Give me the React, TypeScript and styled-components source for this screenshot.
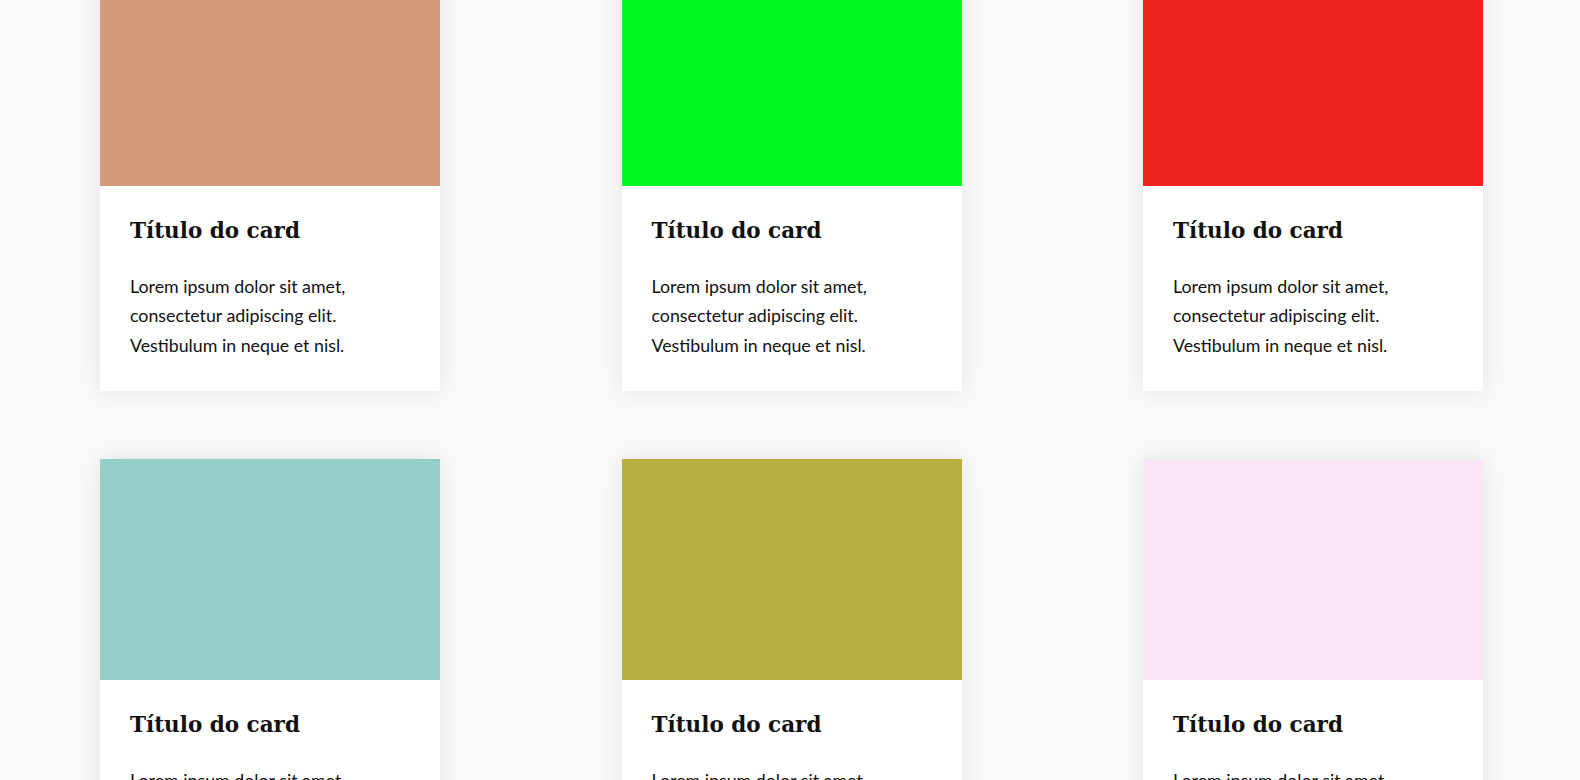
import React from "react";
import styled, { createGlobalStyle } from "styled-components";

const GlobalStyle = createGlobalStyle`
  * {
    box-sizing: border-box;
  }
  html, body {
    margin: 0;
    padding: 0;
    background: #f9f9f9;
    overflow: hidden;
  }
  body {
    font-family: Lato, "Noto Sans", sans-serif;
    color: #111;
  }
`;

const Grid = styled.main`
  display: grid;
  grid-template-columns: repeat(3, 340px);
  column-gap: 181.5px;
  row-gap: 68px;
  padding: 0 0 0 100px;
  margin-top: -35px;
`;

const Card = styled.article`
  background: #fff;
  box-shadow: 0 0 22px rgba(0, 0, 0, 0.09);
  display: flex;
  flex-direction: column;
`;

const Cover = styled.div<{ $color: string }>`
  height: 221px;
  background: ${(p) => p.$color};
`;

const Body = styled.div`
  padding: 30px 30px 31px;
`;

const Title = styled.h2`
  margin: 0 0 25.5px;
  font-family: "DejaVu Serif", "Liberation Serif", serif;
  font-weight: 700;
  font-size: 21.5px;
  line-height: 30px;
  color: #111;
`;

const Text = styled.p`
  margin: 0;
  font-family: Lato, sans-serif;
  font-size: 17.8px;
  line-height: 29.5px;
  color: #111;
`;

const colors = ["#d3997b", "#00f821", "#f0221f", "#94cec8", "#b8af40", "#f9e5f5"];

export default function App() {
  return (
    <>
      <GlobalStyle />
      <Grid>
        {colors.map((c, i) => (
          <Card key={i}>
            <Cover $color={c} />
            <Body>
              <Title>Título do card</Title>
              <Text>
                Lorem ipsum dolor sit amet,
                <br />
                consectetur adipiscing elit.
                <br />
                Vestibulum in neque et nisl.
              </Text>
            </Body>
          </Card>
        ))}
      </Grid>
    </>
  );
}
